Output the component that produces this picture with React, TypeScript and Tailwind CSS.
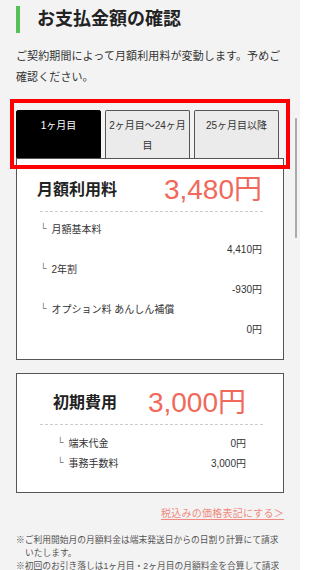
const tabs = ["1ヶ月目", "2ヶ月目〜24ヶ月目", "25ヶ月目以降"];

const monthly = [
  { label: "月額基本料", value: "4,410円" },
  { label: "2年割", value: "-930円" },
  { label: "オプション料 あんしん補償", value: "0円" },
];

const initial = [
  { label: "端末代金", value: "0円" },
  { label: "事務手数料", value: "3,000円" },
];

const Branch = () => <span className="mr-[5px] text-[9px] text-[#666]">└</span>;

export default function App() {
  return (
    <div
      className="relative h-[570px] w-[300px] overflow-hidden bg-[#f3f3f3] text-[#222]"
      style={{ fontFamily: '"Liberation Sans", "Noto Sans CJK JP", sans-serif' }}
    >
      {/* heading */}
      <div className="flex items-center px-4 pt-[6px]">
        <div className="h-[27px] w-[4px] bg-[#55c057]" />
        <h2 className="ml-[17px] text-[18px] font-bold leading-[27px]">お支払金額の確認</h2>
      </div>

      <p className="mt-[13px] px-4 text-[11px] leading-[21px] tracking-[0.1px] text-[#333]">
        ご契約期間によって月額利用料が変動します。予めご確認ください。
      </p>

      {/* tabs */}
      <div className="mt-[22px] flex gap-[4px] px-4">
        {tabs.map((t, i) => (
          <div
            key={t}
            className={
              i === 0
                ? "h-[48px] w-[85px] rounded-t-[2px] border border-black bg-black pt-[5px] text-center text-[10px] leading-[20px] text-white"
                : "h-[48px] w-[85px] rounded-t-[2px] border border-b-0 border-[#555] bg-[#ebebeb] pt-[5px] text-center text-[10px] leading-[20px] text-[#333]"
            }
          >
            {t}
          </div>
        ))}
      </div>

      {/* monthly card */}
      <div className="mx-4 border border-[#555] bg-white pb-[20px]">
        <div className="mt-[15px] flex h-[32px] items-center justify-between pl-[20px] pr-[21px]">
          <span className="text-[16px] font-bold">月額利用料</span>
          <span className="text-[28px] leading-[32px] text-[#f0695a]">3,480円</span>
        </div>
        <div className="ml-[23px] mr-[20px] mt-[5px] border-t border-dashed border-[#ccc]" />
        <div className="mt-[7px] pl-[23px] pr-[21px] text-[10px] text-[#333]">
          {monthly.map((m) => (
            <div key={m.label}>
              <div className="flex h-[20px] items-center">
                <Branch />
                {m.label}
              </div>
              <div className="flex h-[20px] items-center justify-end">{m.value}</div>
            </div>
          ))}
        </div>
      </div>

      {/* initial card */}
      <div className="mx-4 mt-[13px] border border-[#555] bg-white pb-[19px]">
        <div className="mt-[13px] flex h-[32px] items-center justify-between pl-[36px] pr-[37px]">
          <span className="text-[16px] font-bold">初期費用</span>
          <span className="text-[28px] leading-[32px] text-[#f0695a]">3,000円</span>
        </div>
        <div className="ml-[23px] mr-[20px] mt-[5px] border-t border-dashed border-[#ccc]" />
        <div className="mt-[8px] pl-[40px] pr-[37px] text-[10px] text-[#333]">
          {initial.map((m) => (
            <div key={m.label} className="flex h-[20px] items-center justify-between">
              <span className="flex items-center">
                <Branch />
                {m.label}
              </span>
              <span>{m.value}</span>
            </div>
          ))}
        </div>
      </div>

      <div className="mt-[14px] px-4 text-right text-[10px] leading-[14px] tracking-[0.25px]">
        <a href="#" className="text-[#f08a80] underline underline-offset-2">
          税込みの価格表記にする＞
        </a>
      </div>

      <div className="mt-[13px] px-4 text-[8.75px] leading-[13px] text-[#555]">
        <p className="-indent-[9px] pl-[9px]">
          ※ご利用開始月の月額料金は端末発送日からの日割り計算にて請求いたします。
        </p>
        <p className="-indent-[9px] pl-[9px]">
          ※初回のお引き落しは1ヶ月目・2ヶ月目の月額料金を合算して請求いたします。
        </p>
      </div>

      {/* annotation box */}
      <div className="pointer-events-none absolute left-[10px] top-[99px] h-[70px] w-[280px] border-[4px] border-[#ff0000]" />
      {/* scroll indicator */}
      <div className="absolute right-[3px] top-[118px] h-[120px] w-[2px] rounded-full bg-[#aaa]" />
    </div>
  );
}
